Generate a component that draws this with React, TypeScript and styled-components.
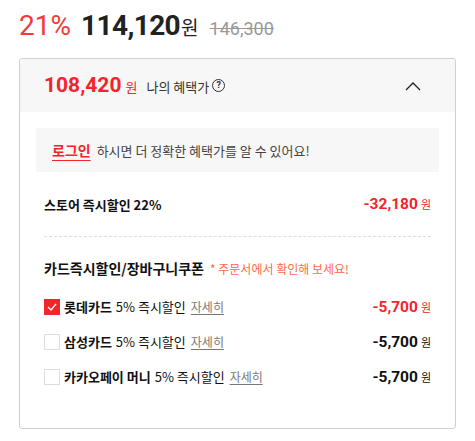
import React, { useState } from 'react';
import styled, { createGlobalStyle } from 'styled-components';

const GlobalStyle = createGlobalStyle`
  body {
    margin: 0;
    background: #fff;
    font-family: Roboto, "Noto Sans CJK KR", sans-serif;
    color: #111;
  }
`;

const Page = styled.div`
  width: 475px;
  padding: 4px 19px 0;
  box-sizing: border-box;
`;

const PriceRow = styled.div`
  display: flex;
  align-items: baseline;
  height: 44px;
  line-height: 44px;
`;

const Rate = styled.span`
  font-size: 28px;
  color: #f23a3a;
  margin-right: 10px;
`;

const Price = styled.span`
  font-size: 28px;
  font-weight: 700;
  color: #222;
  letter-spacing: -0.6px;
`;

const Unit = styled.span`
  font-size: 19px;
  color: #222;
  font-family: "Noto Sans CJK KR", sans-serif;
  margin-left: 1px;
`;

const Original = styled.del`
  font-size: 18px;
  color: #999;
  margin-left: 11px;
`;

const Box = styled.div`
  margin-top: 10px;
  border: 1px solid #cfcfcf;
  border-radius: 3px;
  overflow: hidden;
  padding-bottom: 34px;
`;

const Header = styled.div`
  display: flex;
  align-items: baseline;
  height: 53px;
  line-height: 53px;
  background: #f7f7f7;
  padding: 0 34px 0 24px;
`;

const MyPrice = styled.span`
  font-size: 21px;
  font-weight: 700;
  color: #f2252a;
`;

const SmallUnit = styled.span`
  font-family: "Noto Sans CJK KR", sans-serif;
  font-size: 13px;
  color: #f2252a;
  margin-left: 4px;
`;

const HeaderLabel = styled.span`
  font-family: "Noto Sans CJK KR", sans-serif;
  font-size: 13px;
  color: #333;
  margin-left: 9px;
`;

const HelpIcon = styled.span`
  display: inline-flex;
  align-items: center;
  justify-content: center;
  align-self: center;
  width: 11px;
  height: 11px;
  border: 1px solid #333;
  border-radius: 50%;
  font-size: 9px;
  font-weight: 700;
  color: #333;
  margin-left: 3px;
  line-height: 1;
`;

const Toggle = styled.button`
  margin-left: auto;
  align-self: center;
  border: 0;
  background: none;
  padding: 0;
  display: flex;
  cursor: pointer;
`;

const Body = styled.div`
  padding: 16px 16px 0;
`;

const Banner = styled.div`
  background: #f7f7f7;
  height: 44px;
  display: flex;
  align-items: center;
  padding: 0 16px;
  font-family: "Noto Sans CJK KR", sans-serif;
  font-size: 13px;
  color: #444;
`;

const LoginLink = styled.a`
  color: #f2252a;
  font-weight: 700;
  font-size: 14px;
  text-decoration: underline;
  text-underline-offset: 4px;
  margin-right: 6px;
`;

const Row = styled.div<{ $height: number; $gap?: number }>`
  display: flex;
  align-items: center;
  height: ${(p) => p.$height}px;
  margin-top: ${(p) => p.$gap || 0}px;
  padding: 0 8px;
  font-family: "Noto Sans CJK KR", sans-serif;
  font-size: 13px;
  color: #111;
`;

const RowTitle = styled.span<{ $size: number }>`
  font-size: ${(p) => p.$size}px;
  font-weight: 700;
  color: #111;
`;

const Amount = styled.span<{ $red?: boolean }>`
  margin-left: auto;
  font-family: Roboto, sans-serif;
  font-size: 15.5px;
  font-weight: 700;
  color: ${(p) => (p.$red ? '#f2252a' : '#111')};
`;

const AmountUnit = styled.span<{ $red?: boolean }>`
  font-family: "Noto Sans CJK KR", sans-serif;
  font-size: 11px;
  font-weight: 400;
  color: ${(p) => (p.$red ? '#f2252a' : '#111')};
  margin-left: 3px;
`;

const Divider = styled.hr`
  border: 0;
  border-top: 1px dashed #ddd;
  margin: 0 8px;
`;

const Note = styled.span`
  font-size: 12px;
  color: #ff6a48;
  margin-left: 6px;
`;

const Check = styled.span<{ $on: boolean }>`
  width: 16px;
  height: 16px;
  box-sizing: border-box;
  border: 1px solid ${(p) => (p.$on ? '#f2252a' : '#dcdcdc')};
  background: ${(p) => (p.$on ? '#f2252a' : '#fff')};
  display: inline-flex;
  align-items: center;
  justify-content: center;
  margin-right: 4px;
  flex-shrink: 0;
`;

const CardName = styled.span`
  font-weight: 700;
  color: #111;
  margin-right: 4px;
`;

const Detail = styled.a`
  font-size: 12px;
  color: #777;
  text-decoration: underline;
  text-underline-offset: 2px;
  margin-left: 5px;
`;

const cards = [
  { name: '롯데카드', amount: '-5,700' },
  { name: '삼성카드', amount: '-5,700' },
  { name: '카카오페이 머니', amount: '-5,700' },
];

export default function App() {
  const [checked, setChecked] = useState(0);

  return (
    <Page>
      <GlobalStyle />
      <PriceRow>
        <Rate>21%</Rate>
        <Price>114,120</Price>
        <Unit>원</Unit>
        <Original>146,300</Original>
      </PriceRow>
      <Box>
        <Header>
          <MyPrice>108,420</MyPrice>
          <SmallUnit>원</SmallUnit>
          <HeaderLabel>나의 혜택가</HeaderLabel>
          <HelpIcon>?</HelpIcon>
          <Toggle aria-label="접기">
            <svg width="16" height="10" viewBox="0 0 16 10" fill="none">
              <path d="M1 9L8 2l7 7" stroke="#222" strokeWidth="1.3" />
            </svg>
          </Toggle>
        </Header>
        <Body>
          <Banner>
            <LoginLink>로그인</LoginLink>
            하시면 더 정확한 혜택가를 알 수 있어요!
          </Banner>
          <Row $height={64}>
            <RowTitle $size={13}>스토어 즉시할인 22%</RowTitle>
            <Amount $red>
              -32,180<AmountUnit $red>원</AmountUnit>
            </Amount>
          </Row>
          <Divider />
          <Row $height={42} $gap={10}>
            <RowTitle $size={14}>카드즉시할인/장바구니쿠폰</RowTitle>
            <Note>* 주문서에서 확인해 보세요!</Note>
          </Row>
          {cards.map((c, i) => (
            <Row $height={35} key={c.name} onClick={() => setChecked(i)}>
              <Check $on={checked === i}>
                {checked === i && (
                  <svg width="10" height="8" viewBox="0 0 10 8" fill="none">
                    <path d="M1 4l3 3 5-6" stroke="#fff" strokeWidth="1.3" />
                  </svg>
                )}
              </Check>
              <CardName>{c.name}</CardName>
              5% 즉시할인
              <Detail>자세히</Detail>
              <Amount $red={checked === i}>
                {c.amount}
                <AmountUnit $red={checked === i}>원</AmountUnit>
              </Amount>
            </Row>
          ))}
        </Body>
      </Box>
    </Page>
  );
}
